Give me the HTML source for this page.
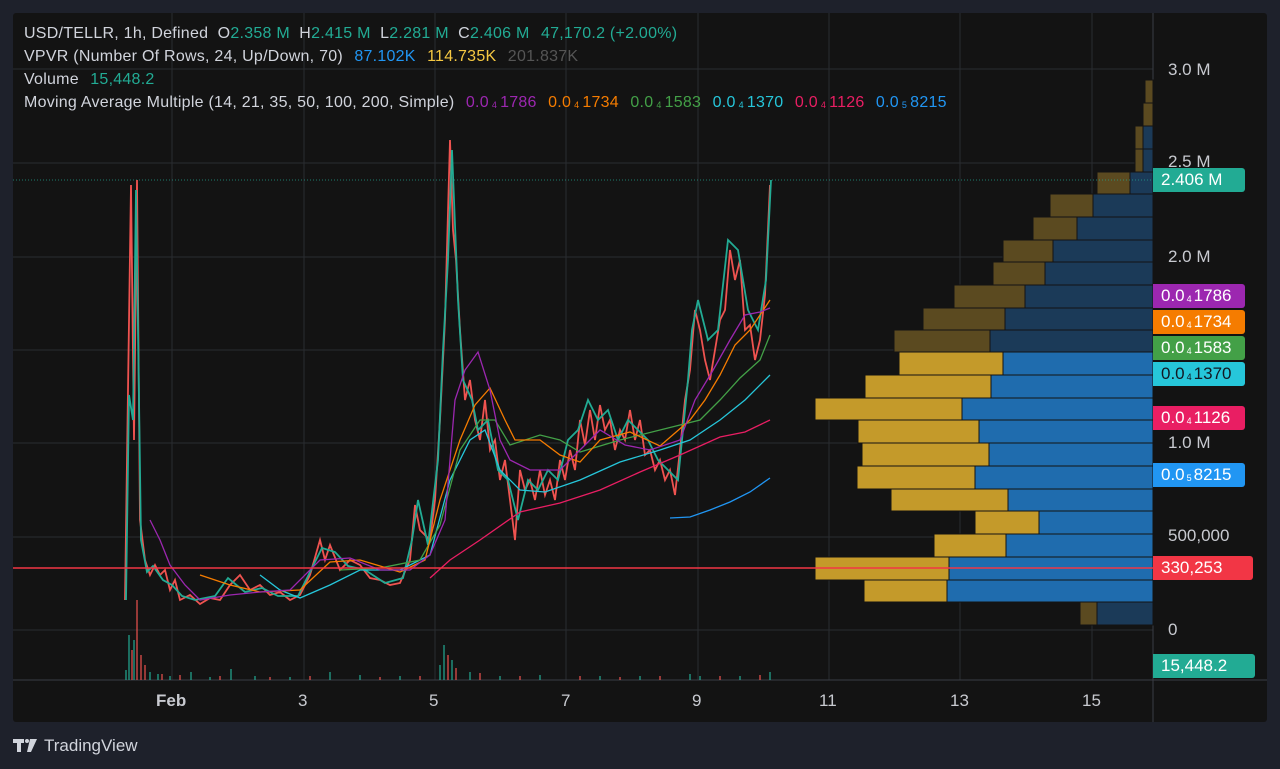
<!DOCTYPE html>
<html><head><meta charset="utf-8"><style>
body{margin:0;width:1280px;height:769px;background:#1e212b;overflow:hidden;font-family:"Liberation Sans",Arial,sans-serif;}
#p{position:absolute;left:13px;top:13px;width:1254px;height:709px;background:#131313;border-radius:3px;}
svg{position:absolute;left:0;top:0}
.lg{position:absolute;left:24px;font-size:16px;letter-spacing:0.25px;color:#d1d4dc;white-space:nowrap;line-height:18px}
.lg span{margin-left:2px}
sub{font-size:9px;vertical-align:-1px;margin:0 3px}
.lb{position:absolute;left:1153px;width:92px;height:24px;border-radius:0 3px 3px 0;font-size:17px;line-height:24px;padding-left:8px;color:#fff;box-sizing:border-box;white-space:nowrap}
.lb sub{margin:0 2px}
.ax{position:absolute;left:1168px;font-size:17px;color:#c8cad0}
.tx{position:absolute;top:691px;font-size:17px;color:#c8cad0}
</style></head><body>
<div id="p"></div>
<svg width="1280" height="769">
<g stroke="#2a2c30" stroke-width="1">
<line x1="172" y1="13" x2="172" y2="680"/><line x1="304" y1="13" x2="304" y2="680"/><line x1="435" y1="13" x2="435" y2="680"/><line x1="566" y1="13" x2="566" y2="680"/><line x1="698" y1="13" x2="698" y2="680"/><line x1="829" y1="13" x2="829" y2="680"/><line x1="960" y1="13" x2="960" y2="680"/><line x1="1092" y1="13" x2="1092" y2="680"/>
<line x1="13" y1="69" x2="1153" y2="69"/><line x1="13" y1="163" x2="1153" y2="163"/><line x1="13" y1="257" x2="1153" y2="257"/><line x1="13" y1="350" x2="1153" y2="350"/><line x1="13" y1="443" x2="1153" y2="443"/><line x1="13" y1="537" x2="1153" y2="537"/><line x1="13" y1="630" x2="1153" y2="630"/>
</g>
<line x1="13" y1="680" x2="1267" y2="680" stroke="#3a3d44"/>
<line x1="1153" y1="13" x2="1153" y2="722" stroke="#3a3d44"/>
<g stroke="#131313" stroke-width="1">
<rect x="1145" y="80" width="8" height="23" fill="#5b4a20"/>
<rect x="1143" y="103" width="10" height="23" fill="#5b4a20"/>
<rect x="1135" y="126" width="8" height="23" fill="#5b4a20"/><rect x="1143" y="126" width="10" height="23" fill="#1b3a58"/>
<rect x="1135" y="149" width="8" height="23" fill="#5b4a20"/><rect x="1143" y="149" width="10" height="23" fill="#1b3a58"/>
<rect x="1097" y="172" width="33" height="22" fill="#5b4a20"/><rect x="1130" y="172" width="23" height="22" fill="#1b3a58"/>
<rect x="1050" y="194" width="43" height="23" fill="#5b4a20"/><rect x="1093" y="194" width="60" height="23" fill="#1b3a58"/>
<rect x="1033" y="217" width="44" height="23" fill="#5b4a20"/><rect x="1077" y="217" width="76" height="23" fill="#1b3a58"/>
<rect x="1003" y="240" width="50" height="22" fill="#5b4a20"/><rect x="1053" y="240" width="100" height="22" fill="#1b3a58"/>
<rect x="993" y="262" width="52" height="23" fill="#5b4a20"/><rect x="1045" y="262" width="108" height="23" fill="#1b3a58"/>
<rect x="954" y="285" width="71" height="23" fill="#5b4a20"/><rect x="1025" y="285" width="128" height="23" fill="#1b3a58"/>
<rect x="923" y="308" width="82" height="22" fill="#5b4a20"/><rect x="1005" y="308" width="148" height="22" fill="#1b3a58"/>
<rect x="894" y="330" width="96" height="22" fill="#5b4a20"/><rect x="990" y="330" width="163" height="22" fill="#1b3a58"/>
<rect x="899" y="352" width="104" height="23" fill="#c49a2a"/><rect x="1003" y="352" width="150" height="23" fill="#1f6cae"/>
<rect x="865" y="375" width="126" height="23" fill="#c49a2a"/><rect x="991" y="375" width="162" height="23" fill="#1f6cae"/>
<rect x="815" y="398" width="147" height="22" fill="#c49a2a"/><rect x="962" y="398" width="191" height="22" fill="#1f6cae"/>
<rect x="858" y="420" width="121" height="23" fill="#c49a2a"/><rect x="979" y="420" width="174" height="23" fill="#1f6cae"/>
<rect x="862" y="443" width="127" height="23" fill="#c49a2a"/><rect x="989" y="443" width="164" height="23" fill="#1f6cae"/>
<rect x="857" y="466" width="118" height="23" fill="#c49a2a"/><rect x="975" y="466" width="178" height="23" fill="#1f6cae"/>
<rect x="891" y="489" width="117" height="22" fill="#c49a2a"/><rect x="1008" y="489" width="145" height="22" fill="#1f6cae"/>
<rect x="975" y="511" width="64" height="23" fill="#c49a2a"/><rect x="1039" y="511" width="114" height="23" fill="#1f6cae"/>
<rect x="934" y="534" width="72" height="23" fill="#c49a2a"/><rect x="1006" y="534" width="147" height="23" fill="#1f6cae"/>
<rect x="815" y="557" width="134" height="23" fill="#c49a2a"/><rect x="949" y="557" width="204" height="23" fill="#1f6cae"/>
<rect x="864" y="580" width="83" height="22" fill="#c49a2a"/><rect x="947" y="580" width="206" height="22" fill="#1f6cae"/>
<rect x="1080" y="602" width="17" height="23" fill="#5b4a20"/><rect x="1097" y="602" width="56" height="23" fill="#1b3a58"/>
</g>
<line x1="13" y1="180" x2="1153" y2="180" stroke="#22ab94" stroke-dasharray="1 2" opacity=".7"/>
<g stroke="#22ab94" stroke-width="1.5" opacity=".8">
<path d="M126 680V670M129 680V635M134 680V640M150 680V672M158 680V674M170 680V676M191 680V672M210 680V677M231 680V669M255 680V676M290 680V677M330 680V672M360 680V675M400 680V676M440 680V665M444 680V645M452 680V660M470 680V672M500 680V676M540 680V675M600 680V676M640 680V676M690 680V674M700 680V676M740 680V676M770 680V672"/></g>
<g stroke="#ef5350" stroke-width="1.5" opacity=".8">
<path d="M132 680V650M137 680V600M141 680V655M145 680V665M162 680V674M180 680V675M220 680V676M270 680V677M310 680V676M380 680V677M420 680V676M448 680V655M456 680V668M480 680V673M520 680V676M580 680V676M620 680V677M660 680V676M720 680V676M760 680V675"/></g>
<polyline fill="none" stroke="#ef5350" stroke-width="1.8" points="125,600 128,390 131,185 134,440 137,180 140,520 145,560 150,575 155,565 160,575 165,570 170,590 175,580 180,600 190,595 200,604 210,598 220,600 230,585 240,575 250,590 260,585 270,595 280,592 290,600 300,595 310,575 320,540 325,560 330,545 340,570 350,560 360,565 370,578 380,580 390,585 400,583 410,560 415,505 420,530 430,540 435,500 440,420 445,320 450,140 453,230 456,260 460,330 465,400 470,380 475,420 480,440 485,400 490,450 495,440 500,480 505,460 510,500 515,540 520,470 525,490 530,480 535,500 540,470 545,495 550,480 555,500 560,460 565,480 570,450 575,470 580,420 585,445 590,410 595,440 600,405 605,430 610,420 615,450 620,430 625,440 630,410 635,440 640,420 645,455 650,450 655,470 660,460 665,480 670,470 675,495 680,450 685,400 690,370 695,310 700,330 705,360 710,380 715,350 720,320 725,310 730,250 735,280 740,260 745,330 750,325 755,360 760,340 765,295 770,185"/>
<polyline fill="none" stroke="#22ab94" stroke-width="1.8" points="126,600 129,395 133,420 136,190 141,540 147,572 153,566 163,580 172,585 182,596 195,600 215,596 228,578 245,592 262,588 278,596 298,596 312,568 322,548 335,552 348,566 365,570 385,583 403,578 412,540 418,500 428,545 438,460 443,350 448,260 452,150 458,300 463,380 472,400 478,430 488,420 498,470 508,480 518,520 528,480 538,490 548,470 558,480 568,440 578,430 588,400 598,420 608,410 618,440 628,420 638,430 648,440 658,460 668,470 678,480 688,380 692,330 698,300 708,340 718,330 728,240 738,250 748,310 758,330 766,280 771,180"/>
<g fill="none" stroke-width="1.3">
<polyline stroke="#2196f3" points="670,518 690,517 710,510 730,502 750,492 770,478"/>
<polyline stroke="#e91e63" points="430,578 450,560 480,540 520,512 560,503 600,490 640,472 680,455 720,437 745,432 770,420"/>
<polyline stroke="#26c6da" points="260,575 280,590 300,598 330,585 360,570 400,570 430,555 450,480 470,440 485,430 500,470 520,490 545,492 580,480 620,462 660,450 690,440 720,420 745,400 770,375"/>
<polyline stroke="#43a047" points="340,570 380,568 420,560 440,525 460,450 480,420 495,420 510,445 540,435 560,440 580,452 620,440 660,430 700,420 720,400 740,378 760,360 770,335"/>
<polyline stroke="#f57c00" points="200,575 230,585 260,592 300,590 330,562 360,560 400,572 425,560 440,500 460,440 475,405 490,388 505,420 515,440 540,440 560,455 580,462 600,440 630,432 660,446 690,420 705,400 720,375 735,345 750,330 770,300"/>
<polyline stroke="#9c27b0" points="150,520 160,540 170,565 185,585 200,600 230,595 260,592 290,590 320,560 350,558 380,570 410,570 430,555 445,520 455,400 465,370 478,352 490,390 500,440 510,460 530,470 560,470 580,450 600,430 625,445 650,450 680,440 695,400 712,372 730,340 745,315 760,312 770,308"/>
</g>
<line x1="13" y1="568" x2="1153" y2="568" stroke="#f23645" stroke-width="1.5"/>
<g fill="#d1d4dc"><path d="M13 739h11v4h-3v9h-4v-9h-4z"/><circle cx="27" cy="741" r="2"/><path d="M30 739h7l-6 13h-4z"/></g>
</svg>
<div class="lg" style="top:25px">USD/TELLR, 1h, Defined &nbsp;O<span style="color:#22ab94;margin:0">2.358 M</span>&nbsp; H<span style="color:#22ab94;margin:0">2.415 M</span>&nbsp; L<span style="color:#22ab94;margin:0">2.281 M</span>&nbsp; C<span style="color:#22ab94;margin:0">2.406 M</span>&nbsp; <span style="color:#22ab94">47,170.2 (+2.00%)</span></div>
<div class="lg" style="top:48px">VPVR (Number Of Rows, 24, Up/Down, 70) &nbsp;<span style="color:#2196f3">87.102K</span> &nbsp;<span style="color:#f5c842">114.735K</span> &nbsp;<span style="color:#555">201.837K</span></div>
<div class="lg" style="top:71px">Volume &nbsp;<span style="color:#22ab94">15,448.2</span></div>
<div class="lg" style="top:94px">Moving Average Multiple (14, 21, 35, 50, 100, 200, Simple) &nbsp;<span style="color:#9c27b0">0.0<sub>4</sub>1786</span> &nbsp;<span style="color:#f57c00">0.0<sub>4</sub>1734</span> &nbsp;<span style="color:#43a047">0.0<sub>4</sub>1583</span> &nbsp;<span style="color:#26c6da">0.0<sub>4</sub>1370</span> &nbsp;<span style="color:#e91e63">0.0<sub>4</sub>1126</span> &nbsp;<span style="color:#2196f3">0.0<sub>5</sub>8215</span></div>
<div class="ax" style="top:60px">3.0 M</div>
<div class="ax" style="top:152px">2.5 M</div>
<div class="ax" style="top:247px">2.0 M</div>
<div class="ax" style="top:433px">1.0 M</div>
<div class="ax" style="top:526px">500,000</div>
<div class="ax" style="top:620px">0</div>
<div class="lb" style="top:168px;background:#22ab94">2.406 M</div>
<div class="lb" style="top:284px;background:#9c27b0">0.0<sub>4</sub>1786</div>
<div class="lb" style="top:310px;background:#f57c00">0.0<sub>4</sub>1734</div>
<div class="lb" style="top:336px;background:#43a047">0.0<sub>4</sub>1583</div>
<div class="lb" style="top:362px;background:#26c6da;color:#131722">0.0<sub>4</sub>1370</div>
<div class="lb" style="top:406px;background:#e91e63">0.0<sub>4</sub>1126</div>
<div class="lb" style="top:463px;background:#2196f3">0.0<sub>5</sub>8215</div>
<div class="lb" style="top:556px;background:#f23645;width:100px">330,253</div>
<div class="lb" style="top:654px;background:#22ab94;width:102px">15,448.2</div>
<div class="tx" style="left:156px;font-weight:bold">Feb</div>
<div class="tx" style="left:298px">3</div>
<div class="tx" style="left:429px">5</div>
<div class="tx" style="left:561px">7</div>
<div class="tx" style="left:692px">9</div>
<div class="tx" style="left:819px">11</div>
<div class="tx" style="left:950px">13</div>
<div class="tx" style="left:1082px">15</div>
<div style="position:absolute;left:44px;top:736px;font-size:17px;color:#d1d4dc">TradingView</div>
</body></html>
